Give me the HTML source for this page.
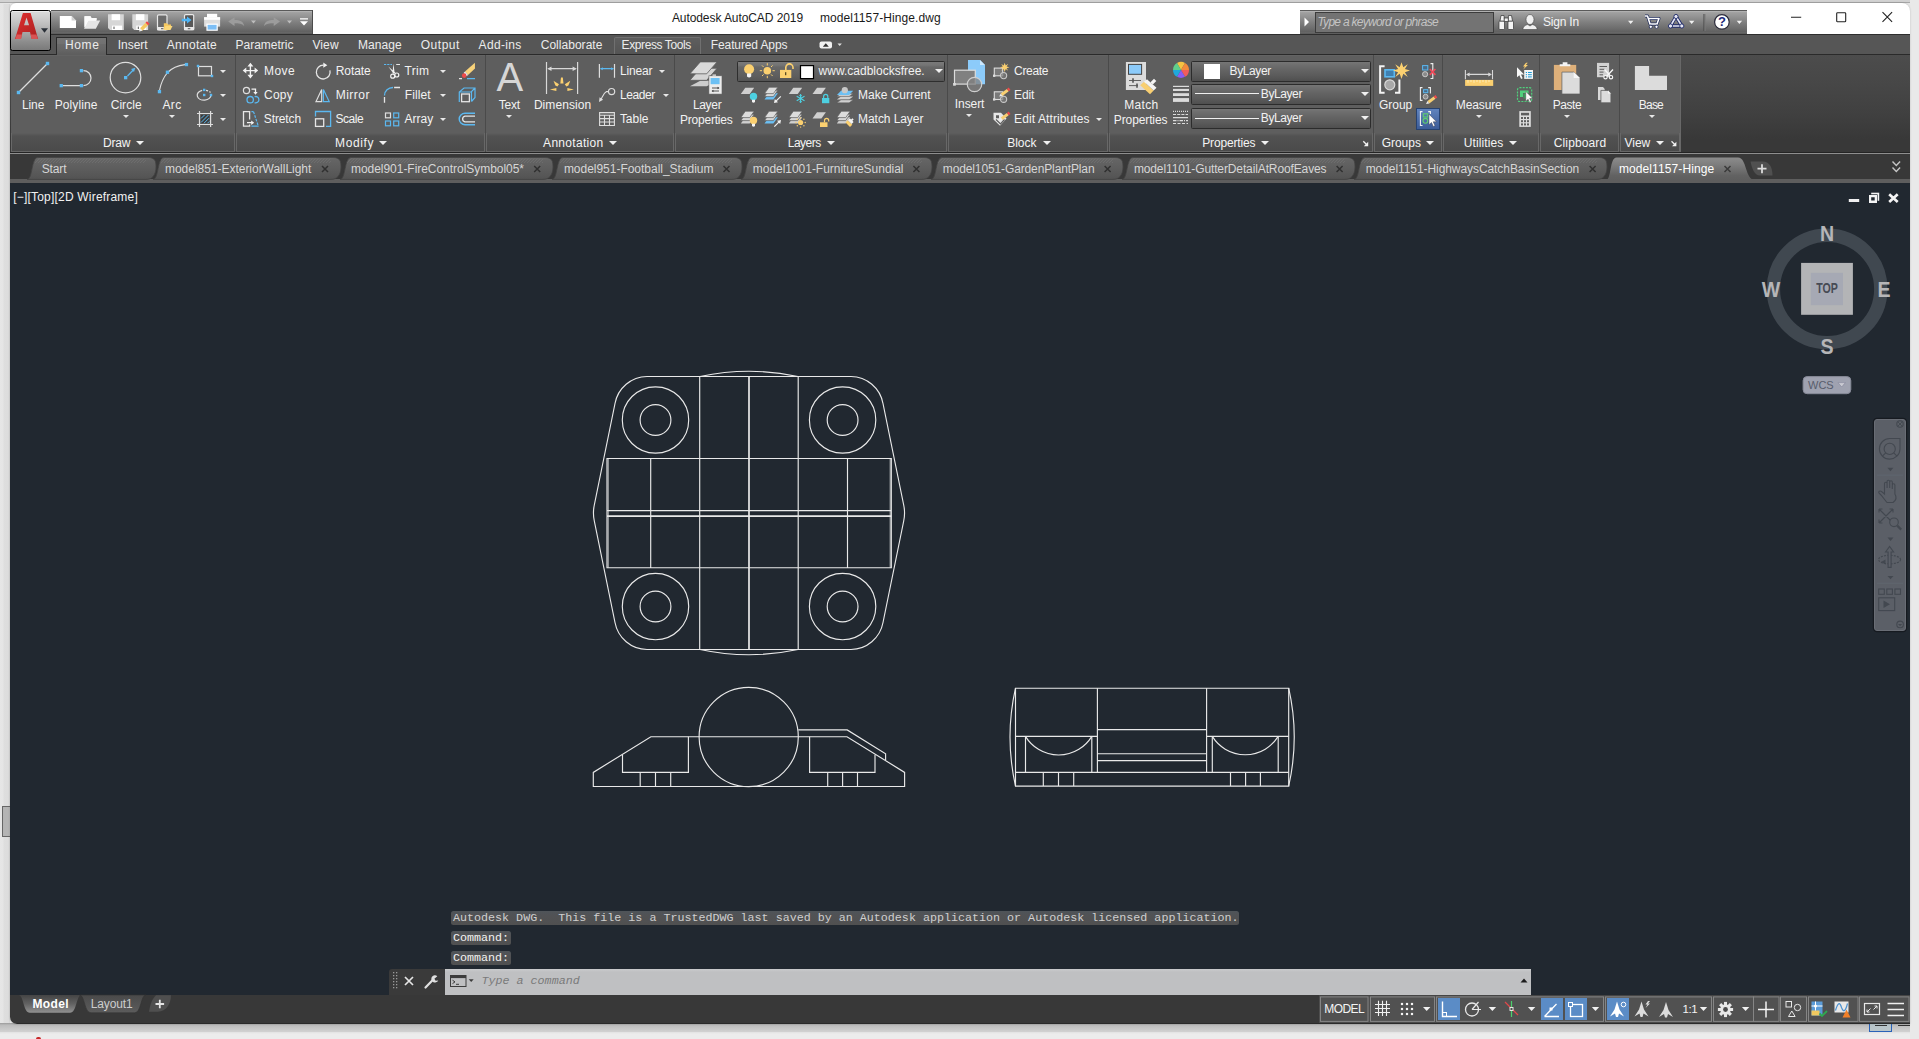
<!DOCTYPE html>
<html><head><meta charset="utf-8"><title>Autodesk AutoCAD 2019 - model1157-Hinge.dwg</title>
<style>
*{box-sizing:border-box;margin:0;padding:0}
html,body{width:1919px;height:1039px;overflow:hidden}
body{position:relative;background:#e6e6e6;font-family:"Liberation Sans",sans-serif;font-size:12px;color:#f0f0f0}
.a{position:absolute}
.t{position:absolute;white-space:nowrap;line-height:14px;height:14px}
svg{position:absolute;overflow:visible}
/* desktop behind */
#bgtop{left:0;top:0;width:1919px;height:4px;background:linear-gradient(#d2d2d2 0,#d2d2d2 1.8px,#a8a8a8 2px,#a8a8a8 3px,#e6e6e6 3px)}
#bgbot{left:0;top:1023px;width:1919px;height:16px;background:linear-gradient(#9a9a9a 0,#bcbcbc 2px,#c6c6c6 5px,#d0d0d0 8.5px,#e4e4e4 9.5px,#ececec 11px,#ececec 16px)}
#win{left:10px;top:3px;width:1900px;height:1021px;background:#fff;border-radius:6px 8px 0 7px;overflow:hidden;box-shadow:0 0 2px rgba(0,0,0,.22)}
/* inside #win coordinates are offset by (-10,-3); use #in wrapper to keep page coords */
#in{left:-10px;top:-3px;width:1919px;height:1039px}
#tabrow{left:10px;top:34px;width:1900px;height:20px;background:#565656;border-top:1px solid #2e2e2e}
#ribbon{left:10px;top:54px;width:1900px;height:99px;background:linear-gradient(#2a2a2a 0,#2a2a2a 1px,#4c4c4c 1px,#474747 30px,#404040 60px,#383838 85px,#383838 98px,#2a2a2a 98px)}
#doctabs{left:10px;top:153px;width:1900px;height:30px;background:#383838}
#canvas{left:10px;top:183px;width:1900px;height:812px;background:#212830}
#status{left:10px;top:995px;width:1900px;height:29px;background:linear-gradient(#383838 0,#383838 28px,#2a2a2a 28px)}
.rt{color:#ececec}
.panel{position:absolute;top:55px;height:97px;background:linear-gradient(#656565 0,#5e5e5e 1.5px,#5e5e5e 100%);box-shadow:inset -1px 0 0 #4a4a4a}
.ptitle{position:absolute;left:0;right:1px;bottom:0;height:19px;background:linear-gradient(#5e5e5e 0,#525252 3px,#4a4a4a 100%);border-right:1px solid #686868;border-left:1px solid #686868;border-bottom:1px solid #666}
.pt{position:absolute;white-space:nowrap;line-height:14px;height:14px;color:#f4f4f4}
.dd{position:absolute;width:0;height:0;border-left:3px solid transparent;border-right:3px solid transparent;border-top:3px solid #e8e8e8}
.dd4{position:absolute;width:0;height:0;border-left:4px solid transparent;border-right:4px solid transparent;border-top:4px solid #f0f0f0}
.lb{color:#f2f2f2}
.cl{width:40px;text-align:center;color:#b6b6b8;font-weight:bold;font-size:22.5px;line-height:26px;height:26px;transform:scaleX(.87)}
.hl{background:linear-gradient(#4f5459,#515254 40%,#505050);border-radius:2.5px}
.mono{font-family:"Liberation Mono",monospace;font-size:11.7px}
.cmb{background:linear-gradient(#767676 0,#6e6e6e 3px,#646464 8px,#5c5c5c 13px,#4f4f4f 100%);border:1px solid #2c2c2c;border-radius:1.5px}
</style></head><body>
<div class="a" style="left:0;top:3px;width:10px;height:1021px;background:linear-gradient(90deg,#e6e6e6 0,#e5e5e5 3px,#dedede 4px,#dcdcdc 9px,#d0d0d0 10px)"></div>
<div class="a" style="left:2.3px;top:806.2px;width:9px;height:31.3px;background:#b4b4b4;border:1px solid #666"></div>
<div class="a" id="bgtop"></div>
<div class="a" id="bgbot"></div>
<div class="a" style="left:1868.5px;top:1020px;width:23.5px;height:12px;background:#b9c5c9;border:1.4px solid #2a62b8"></div>
<div class="a" style="left:1875px;top:1024.8px;width:11.5px;height:1.2px;background:#333"></div>
<div class="a" style="left:1898px;top:1024.8px;width:12px;height:1.2px;background:#333"></div>
<div class="a" style="left:1910px;top:0;width:9px;height:1039px;background:#e9e9e9"></div>
<div class="a" style="left:36px;top:1036.5px;width:5px;height:3px;background:#c62828;border-radius:2px 2px 0 0"></div>
<div class="a" id="win"><div class="a" id="in">
<!-- BASE AREAS -->
<div class="a" id="tabrow"></div>
<div class="a" id="ribbon"></div>
<div class="a" id="doctabs"></div>
<div class="a" id="canvas"></div>
<div class="a" id="status"></div>
<!-- TITLE BAR -->
<div class="t" style="letter-spacing:-0.078px;left:671.90px;top:10.84px;color:#1a1a1a">Autodesk AutoCAD 2019</div>
<div class="t" style="letter-spacing:0.084px;left:819.90px;top:10.84px;color:#1a1a1a">model1157-Hinge.dwg</div>
<div class="a" id="qat" style="left:51px;top:10px;width:262px;height:24px;border-right:1px solid #4c4c4c;background:linear-gradient(#555 0,#5a5a5a .5px,#b2b2b2 1.4px,#a0a0a0 2.6px,#929292 7px,#808080 12px,#6e6e6e 18px,#5f5f5f 22.4px,#8a8a8a 23px,#555 23.6px,#4a4a4a 24px)"></div>
<div class="a" id="info" style="left:1300px;top:10px;width:446.5px;height:24px;background:linear-gradient(#555 0,#5a5a5a .5px,#b2b2b2 1.4px,#a0a0a0 2.6px,#929292 7px,#808080 12px,#6e6e6e 18px,#5f5f5f 22.4px,#8a8a8a 23px,#555 23.6px,#4a4a4a 24px)"></div>
<div class="a" style="left:1314.5px;top:11.5px;width:179px;height:21px;background:#737373;border:1px solid #3c3c3c"></div>
<div class="t" style="letter-spacing:-0.724px;left:1317.40px;top:14.54px;color:#c4c4c4;font-style:italic">Type a keyword or phrase</div>
<div class="t" style="letter-spacing:-0.193px;left:1542.90px;top:15.34px;color:#f4f4f4">Sign In</div>
<div class="a" id="appbtn" style="left:10px;top:10px;width:41px;height:41px;background:linear-gradient(#f4f4f4 0,#d8d8d8 1.5px,#cfcfcf 6px,#bdbdbd 14px,#a5a5a5 22px,#8c8c8c 31px,#7a7a7a 39px);border:1.3px solid #000;border-radius:2.5px"></div>
<svg style="left:0;top:0" width="1919" height="1039" viewBox="0 0 1919 1039">
<defs><linearGradient id="ared" x1="0" y1="0" x2="1" y2="1"><stop offset="0" stop-color="#e03030"/><stop offset=".5" stop-color="#c62828"/><stop offset="1" stop-color="#a82222"/></linearGradient></defs>
<!-- A logo -->
<path d="M22.900 13 H30.600 L38.100 39 H31.600 L30 32 H22.500 L21 39 H15 Z M26.500 17.500 L24 25.200 H29.100 Z" fill="url(#ared)" fill-rule="evenodd"/>
<path d="M15.500 39 l1.200 -4.500 h5.200 l-0.900 4.500z M31.600 39 l-1 -4.500 h5.800 l1.500 4.500z" fill="#e86a6a" opacity=".7"/>
<path d="M41 28.200 h7 l-3.500 4.600z" fill="#2a3038"/>
<!-- QAT icons -->
<path d="M59.800 16 H71.600 L76 20.500 V28 H59.800 Z" fill="#fff"/><path d="M71.600 16 V20.500 H76 Z" fill="#d0d0d0"/>
<path d="M84.500 27.500 V16.200 H90.500 L91.500 18 H96.500 V20.500" fill="#fff"/><path d="M84 28.700 L88.300 20.500 H100.200 L95.800 28.700 Z" fill="#e6e6e6"/><path d="M84.500 16.200 H90.500 L91.500 18 H96.500 V20.500 H88.300 L84.500 27.500Z" fill="#fbfbfb"/>
<g id="sv"><path d="M108 14.200 H123.800 V30 H110 L108 28 Z" fill="#d6d6d6"/><rect x="111.600" y="14.200" width="8.500" height="6" fill="#fff"/><rect x="112" y="25.600" width="10" height="4.400" fill="#fff"/><rect x="113.500" y="26.600" width="1" height="2.400" fill="#555"/></g>
<use href="#sv" x="24.300"/>
<path d="M140 28.300 L145.500 22.700 L148 25.200 L142.500 30.800 Z" fill="#f5c860"/><path d="M145.500 22.700 L147 21.200 L149.500 23.700 L148 25.200 Z" fill="#ee4848"/><path d="M140 28.300 l-1 3.200 l3.500 -0.700z" fill="#eee"/>
<rect x="157.500" y="14.800" width="9.500" height="15" rx="1.200" fill="#6a6a6a" stroke="#e8e8e8" stroke-width="1.200"/><rect x="157" y="27" width="10.500" height="3.300" fill="#e8e8e8"/><rect x="161" y="28.200" width="2.500" height="1" fill="#555"/>
<path d="M163.800 30 V23.300 H167 L168 24.500 H171 V26" fill="#f5c860"/><path d="M163.500 30 L165.500 26 H172.500 L170.500 30Z" fill="#fbd87a"/>
<rect x="184.500" y="14.600" width="9.200" height="15" rx="1.200" fill="#585858" stroke="#e8e8e8" stroke-width="1.200"/><rect x="184" y="27" width="10.200" height="3.200" fill="#e8e8e8"/><rect x="187.800" y="28.200" width="2.500" height="1" fill="#555"/>
<path d="M181.800 18.800 H187 V16.500 L191.500 20 L187 23.500 V21.200 H181.800Z" fill="#4db4f5"/>
<rect x="207" y="13.800" width="10.200" height="6" fill="#fff"/><rect x="204.100" y="17.200" width="16" height="9.400" fill="#dedede"/><rect x="204.100" y="17.200" width="16" height="2.600" fill="#fff"/><rect x="207" y="24.200" width="10.200" height="6" fill="#7cbef5" stroke="#fff" stroke-width="1.200"/>
<path d="M228.200 21.500 L234.500 17.300 V20 C240 20 243.500 21.500 244.200 26 C242 23.500 239 23.300 234.500 23.300 V25.900 Z" fill="#9c9c9c"/>
<path d="M280 21.500 L273.700 17.300 V20 C268.200 20 264.700 21.500 264 26 C266.200 23.500 269.200 23.300 273.700 23.300 V25.900 Z" fill="#9c9c9c"/>
<path d="M251 20.400 h5 l-2.500 3z M287 20.400 h5 l-2.500 3z" fill="#bdbdbd"/>
<path d="M300 18.200 h8 v1.300 h-8z M300 21.200 h8 l-4 4.400z" fill="#fff"/>
<!-- ribbon minimize btn -->
<rect x="819.500" y="41.500" width="12.500" height="7" rx="2" fill="#f0f0f0"/><path d="M822.800 46.700 h6 l-3 -3.400z" fill="#333"/><path d="M837.500 43.500 h4.400 l-2.200 2.600z" fill="#e0e0e0"/>
<!-- infocenter icons -->
<path d="M1304.500 17.500 v9 l4.500 -4.500z" fill="#fff"/>
<g fill="#f4f4f4" stroke="#333" stroke-width=".7"><rect x="1499" y="21" width="5.500" height="8.500" rx="1"/><rect x="1508" y="21" width="5.500" height="8.500" rx="1"/><path d="M1500 21 l1 -5.500 h3 l0.500 5.500z M1512.500 21 l-1 -5.500 h-3 l-0.500 5.500z"/><rect x="1504.200" y="18" width="4" height="3.500"/></g>
<g fill="#f0f0f0" stroke="#444" stroke-width=".6"><ellipse cx="1530" cy="19.500" rx="4" ry="5"/><path d="M1522.800 29.500 c0.500 -4 3.500 -4.500 5 -5 l2.200 1.500 l2.200 -1.500 c1.500 0.500 4.500 1 5 5z"/></g>
<path d="M1628 20.800 h5.400 l-2.700 3.200z M1689 20.800 h5.400 l-2.700 3.200z M1736.700 20.800 h5.400 l-2.700 3.200z" fill="#f0f0f0"/>
<g fill="none" stroke="#1e2a5a" stroke-width="3" stroke-linejoin="round"><path d="M1645 16 h2.500 l2.500 8 h7 l2 -5.500 h-10"/></g>
<g fill="none" stroke="#fff" stroke-width="1.600" stroke-linejoin="round"><path d="M1645 16 h2.500 l2.500 8 h7 l2 -5.500 h-10"/></g>
<circle cx="1650.800" cy="26.800" r="1.600" fill="#fff" stroke="#1e2a5a" stroke-width=".8"/><circle cx="1656.500" cy="26.800" r="1.600" fill="#fff" stroke="#1e2a5a" stroke-width=".8"/>
<path d="M1676 16.500 L1670.500 26 H1681.800 Z" fill="none" stroke="#1e2a6a" stroke-width="3.400" stroke-linejoin="round"/><path d="M1676 16.500 L1670.500 26 H1681.800 Z" fill="none" stroke="#e8e8f4" stroke-width="1.600" stroke-linejoin="round"/>
<g fill="#e8e8f4" stroke="#1e2a6a" stroke-width=".9"><circle cx="1676" cy="16.500" r="2.100"/><circle cx="1670.500" cy="26" r="2.100"/><circle cx="1681.800" cy="26" r="2.100"/></g>
<path d="M1704 14 v17" stroke="#444" stroke-width="1"/><path d="M1705 14 v17" stroke="#7a7a7a" stroke-width="1"/>
<circle cx="1721.900" cy="21.900" r="7.300" fill="#fff" stroke="#2a2a3a" stroke-width="1.200"/>
<!-- window controls -->
<path d="M1791 17.200 h10.200" stroke="#222" stroke-width="1.100"/>
<rect x="1836.700" y="12.700" width="9" height="9" rx=".8" fill="none" stroke="#222" stroke-width="1.100"/>
<path d="M1882.500 12.200 l9.600 9.600 M1892.100 12.200 l-9.600 9.600" stroke="#222" stroke-width="1.100"/>
</svg>
<div class="t" style="left:1717.500px;top:14.500px;width:9px;text-align:center;color:#1e2a7a;font-weight:bold;font-size:13px">?</div>
<!-- RIBBON TABS -->
<div class="a" style="left:56.2px;top:37.2px;width:50.8px;height:17.8px;background:linear-gradient(#747474 0,#717171 5.5px,#6a6a6a 6.5px,#656565 12px,#5e5e5e 16px);border:1px solid #2a2a2a;border-bottom:none"></div>
<div class="a" style="left:613.5px;top:36.5px;width:87px;height:17.5px;background:linear-gradient(#5e5e5e,#545454);border:1px solid #707070;border-bottom:none;border-radius:2px 2px 0 0"></div>
<div class="t rt" style="letter-spacing:0.628px;left:65.00px;top:38.14px">Home</div>
<div class="t rt" style="letter-spacing:-0.043px;left:117.80px;top:38.14px">Insert</div>
<div class="t rt" style="letter-spacing:0.279px;left:166.80px;top:38.14px">Annotate</div>
<div class="t rt" style="letter-spacing:-0.013px;left:235.50px;top:38.14px">Parametric</div>
<div class="t rt" style="letter-spacing:0.134px;left:312.40px;top:38.14px">View</div>
<div class="t rt" style="letter-spacing:0.105px;left:357.90px;top:38.14px">Manage</div>
<div class="t rt" style="letter-spacing:0.534px;left:420.70px;top:38.14px">Output</div>
<div class="t rt" style="letter-spacing:0.335px;left:478.60px;top:38.14px">Add-ins</div>
<div class="t rt" style="letter-spacing:0.033px;left:540.70px;top:38.14px">Collaborate</div>
<div class="t rt" style="letter-spacing:-0.399px;left:621.60px;top:38.14px">Express Tools</div>
<div class="t rt" style="letter-spacing:-0.114px;left:710.80px;top:38.14px">Featured Apps</div>
<!-- RIBBON PANELS -->
<div class="panel" style="left:11px;width:225px"><div class="ptitle"></div></div>
<div class="panel" style="left:236px;width:250px"><div class="ptitle"></div></div>
<div class="panel" style="left:486px;width:189px"><div class="ptitle"></div></div>
<div class="panel" style="left:675px;width:273px"><div class="ptitle"></div></div>
<div class="panel" style="left:948px;width:161px"><div class="ptitle"></div></div>
<div class="panel" style="left:1109px;width:265px"><div class="ptitle"></div></div>
<div class="panel" style="left:1374px;width:69px"><div class="ptitle"></div></div>
<div class="panel" style="left:1443px;width:97px"><div class="ptitle"></div></div>
<div class="panel" style="left:1540px;width:80px"><div class="ptitle"></div></div>
<div class="panel" style="left:1620px;width:61px;box-shadow:inset -1px 0 0 #686868"><div class="ptitle"></div></div>
<!-- panel titles -->
<div class="pt" style="letter-spacing:-0.172px;left:102.90px;top:136.14px">Draw</div><div class="dd4" style="left:136px;top:141px"></div>
<div class="pt" style="letter-spacing:0.591px;left:335.10px;top:136.14px">Modify</div><div class="dd4" style="left:379px;top:141px"></div>
<div class="pt" style="letter-spacing:0.301px;left:543.10px;top:136.14px">Annotation</div><div class="dd4" style="left:609px;top:141px"></div>
<div class="pt" style="letter-spacing:-0.526px;left:787.80px;top:136.14px">Layers</div><div class="dd4" style="left:827px;top:141px"></div>
<div class="pt" style="letter-spacing:-0.036px;left:1007.20px;top:136.14px">Block</div><div class="dd4" style="left:1042.5px;top:141px"></div>
<div class="pt" style="letter-spacing:-0.156px;left:1202.20px;top:136.14px">Properties</div><div class="dd4" style="left:1261px;top:141px"></div>
<div class="pt" style="letter-spacing:-0.032px;left:1381.70px;top:136.14px">Groups</div><div class="dd4" style="left:1426px;top:141px"></div>
<div class="pt" style="letter-spacing:0.116px;left:1463.70px;top:136.14px">Utilities</div><div class="dd4" style="left:1509px;top:141px"></div>
<div class="pt" style="letter-spacing:0.116px;left:1553.80px;top:136.14px">Clipboard</div>
<div class="pt" style="letter-spacing:-0.032px;left:1624.60px;top:136.14px">View</div><div class="dd4" style="left:1656px;top:141px"></div>
<!-- big button labels -->
<div class="t lb" style="letter-spacing:-0.062px;left:21.90px;top:97.84px">Line</div>
<div class="t lb" style="letter-spacing:0.110px;left:54.70px;top:97.84px">Polyline</div>
<div class="t lb" style="letter-spacing:0.046px;left:110.70px;top:97.84px">Circle</div>
<div class="t lb" style="letter-spacing:0.350px;left:162.50px;top:97.84px">Arc</div>
<div class="dd" style="left:122.5px;top:115px"></div><div class="dd" style="left:168.5px;top:115px"></div>
<div class="dd" style="left:219.5px;top:70px"></div><div class="dd" style="left:219.5px;top:94px"></div><div class="dd" style="left:219.5px;top:118px"></div>
<!-- modify labels -->
<div class="t lb" style="letter-spacing:0.385px;left:264.10px;top:63.74px">Move</div><div class="t lb" style="letter-spacing:0.195px;left:264.10px;top:88.14px">Copy</div><div class="t lb" style="letter-spacing:-0.119px;left:263.80px;top:112.14px">Stretch</div>
<div class="t lb" style="letter-spacing:-0.052px;left:335.70px;top:63.74px">Rotate</div><div class="t lb" style="letter-spacing:0.494px;left:335.70px;top:88.14px">Mirror</div><div class="t lb" style="letter-spacing:-0.458px;left:335.40px;top:112.14px">Scale</div>
<div class="t lb" style="letter-spacing:0.351px;left:404.50px;top:63.74px">Trim</div><div class="t lb" style="letter-spacing:0.071px;left:404.80px;top:88.14px">Fillet</div><div class="t lb" style="letter-spacing:0.032px;left:404.50px;top:112.14px">Array</div>
<div class="dd" style="left:439.5px;top:70px"></div><div class="dd" style="left:440.4px;top:94px"></div><div class="dd" style="left:440.4px;top:118px"></div>
<!-- annotation labels -->
<div class="t lb" style="letter-spacing:-0.272px;left:498.80px;top:97.84px">Text</div><div class="dd" style="left:506.4px;top:115px"></div>
<div class="t lb" style="letter-spacing:0.062px;left:533.90px;top:97.84px">Dimension</div>
<div class="t lb" style="letter-spacing:-0.172px;left:619.90px;top:63.74px">Linear</div><div class="t lb" style="letter-spacing:-0.395px;left:619.90px;top:88.14px">Leader</div><div class="t lb" style="letter-spacing:-0.022px;left:619.90px;top:112.14px">Table</div>
<div class="dd" style="left:659.4px;top:70px"></div><div class="dd" style="left:662.6px;top:94px"></div>
<!-- layers labels -->
<div class="t lb" style="letter-spacing:-0.308px;left:692.90px;top:97.84px">Layer</div>
<div class="t lb" style="letter-spacing:-0.200px;left:679.90px;top:112.54px">Properties</div>
<div class="a" style="left:737px;top:60.5px;width:208px;height:21px;background:linear-gradient(#797979 0,#757575 3px,#686868 5px,#636363 9px,#5e5e5e 14px,#555 100%);border:1px solid #2e2e2e;border-radius:1.5px"></div>
<div class="t lb" style="letter-spacing:0.003px;left:818.60px;top:63.74px">www.cadblocksfree.</div><div class="dd4" style="left:935px;top:69px"></div>
<div class="t lb" style="letter-spacing:-0.018px;left:858.10px;top:88.14px">Make Current</div><div class="t lb" style="letter-spacing:-0.073px;left:858.10px;top:112.14px">Match Layer</div>
<!-- block labels -->
<div class="t lb" style="letter-spacing:-0.083px;left:954.80px;top:96.64px">Insert</div><div class="dd" style="left:966.4px;top:114px"></div>
<div class="t lb" style="letter-spacing:-0.326px;left:1014.10px;top:63.74px">Create</div><div class="t lb" style="letter-spacing:-0.129px;left:1014.10px;top:88.14px">Edit</div><div class="t lb" style="letter-spacing:0.104px;left:1014.10px;top:112.14px">Edit Attributes</div>
<div class="dd" style="left:1096.4px;top:118px"></div>
<!-- properties labels -->
<div class="t lb" style="letter-spacing:0.328px;left:1124.20px;top:97.84px">Match</div>
<div class="t lb" style="letter-spacing:-0.111px;left:1113.80px;top:112.54px">Properties</div>
<div class="a cmb" style="left:1191px;top:60.5px;width:180px;height:21px"></div>
<div class="a cmb" style="left:1191px;top:83.5px;width:180px;height:21px"></div>
<div class="a cmb" style="left:1191px;top:107.5px;width:180px;height:21px"></div>
<div class="a" style="left:1204px;top:63.5px;width:15.5px;height:15px;background:#fff"></div>
<div class="t lb" style="letter-spacing:-0.372px;left:1229.50px;top:63.74px">ByLayer</div><div class="dd4" style="left:1361px;top:69px"></div>
<div class="a" style="left:1195px;top:93.3px;width:64px;height:1.2px;background:#f0f0f0"></div>
<div class="t lb" style="letter-spacing:-0.405px;left:1260.80px;top:86.54px">ByLayer</div><div class="dd4" style="left:1361px;top:92px"></div>
<div class="a" style="left:1195px;top:117.9px;width:64px;height:1.2px;background:#f0f0f0"></div>
<div class="t lb" style="letter-spacing:-0.405px;left:1260.80px;top:110.64px">ByLayer</div><div class="dd4" style="left:1361px;top:116px"></div>
<!-- groups etc -->
<div class="t lb" style="letter-spacing:-0.065px;left:1379.10px;top:97.84px">Group</div>
<div class="a" style="left:1416px;top:108px;width:24px;height:22px;background:linear-gradient(#6083bd,#3c5c98);border:1px solid #27426f"></div>
<div class="t lb" style="letter-spacing:-0.115px;left:1455.80px;top:97.84px">Measure</div><div class="dd" style="left:1475.6px;top:115px"></div>
<div class="t lb" style="letter-spacing:-0.472px;left:1552.80px;top:97.84px">Paste</div><div class="dd" style="left:1564.3px;top:115px"></div>
<div class="t lb" style="letter-spacing:-0.786px;left:1638.80px;top:97.84px">Base</div><div class="dd" style="left:1648.5px;top:115px"></div>
<!-- RIBBON ICONS: DRAW + MODIFY -->
<svg style="left:0;top:0" width="1919" height="1039" viewBox="0 0 1919 1039" fill="none" stroke-linecap="butt">
<g stroke="#dedede" stroke-width="1.200">
<!-- line -->
<path d="M19.500 91.500 L46.500 64.500"/>
<!-- polyline -->
<path d="M63 85.600 H80 M83.500 70.600 A7.500 7.500 0 0 1 83.500 85.600"/>
<!-- circle -->
<circle cx="125.500" cy="77.600" r="15.300"/>
<!-- arc -->
<path d="M159.600 90 Q161.500 80 167.500 72.500 Q174 66 185 64.600"/>
<!-- rectangle -->
<rect x="198.500" y="66.500" width="13" height="9.300"/>
<!-- ellipse -->
<path d="M202.200 90.300 A6.900 5 0 1 0 211 95" /><path d="M206 90.300 A6.900 5 0 0 1 210.500 92.500" stroke-dasharray="2 1.500"/>
<!-- hatch -->
<path d="M199.500 111 V127 M210.600 111 V127 M197 113.500 H213 M197 124.500 H213"/>
</g>
<rect x="200.800" y="114.800" width="8.500" height="8.500" fill="#3c3c3c"/>
<path d="M201 118.500 l3.500 -3.500 M201 122.500 l7.500 -7.500 M204 123.200 l5 -5 M207.500 123.200 l1.800 -1.800" stroke="#5bb8f0" stroke-width="1"/>
<g fill="#5bb8f0">
<rect x="16.800" y="90.800" width="3.400" height="3.400"/><rect x="45.800" y="61.800" width="3.400" height="3.400"/>
<rect x="59.600" y="84" width="3.300" height="3.300"/><rect x="79.800" y="84" width="3.300" height="3.300"/><rect x="79.800" y="69" width="3.300" height="3.300"/>
<rect x="124" y="76" width="3.300" height="3.300"/>
<rect x="157.800" y="90" width="3.300" height="3.300"/><rect x="165.800" y="70.600" width="3.300" height="3.300"/><rect x="184.800" y="62.900" width="3.300" height="3.300"/>
<rect x="196.800" y="64.800" width="2.400" height="2.400"/><rect x="210.800" y="74.800" width="2.400" height="2.400"/>
<rect x="203" y="88.700" width="2.400" height="2.400"/><rect x="203" y="93.800" width="2.400" height="2.400"/><rect x="209.800" y="93.800" width="2.400" height="2.400"/>
</g>
<path d="M127.500 76 L133.500 69.800" stroke="#5bb8f0" stroke-width="1.300"/><path d="M135.300 67.800 l-4.300 1.300 l3 3z" fill="#5bb8f0"/>
<!-- MODIFY -->
<!-- move -->
<path d="M250.400 65 V76.200 M244.800 70.600 H256" stroke="#f2f2f2" stroke-width="1.400"/>
<path d="M250.400 62.800 l3 3.600 h-6z M250.400 78.400 l3 -3.600 h-6z M242.700 70.600 l3.600 -3 v6z M258.200 70.600 l-3.600 -3 v6z" fill="#f2f2f2"/>
<!-- copy -->
<circle cx="246.500" cy="90.500" r="3.100" stroke="#dedede" stroke-width="1.200"/>
<path d="M251.500 89.200 H255.500 V92.500" stroke="#f2f2f2" stroke-width="1.300"/><path d="M253.300 92 h4.400 l-2.200 2.800z" fill="#f2f2f2"/>
<circle cx="250.200" cy="99.700" r="3.200" stroke="#5bb8f0" stroke-width="1.300"/><path d="M254.600 96.700 A3.200 3.200 0 1 1 254.600 102.700" stroke="#5bb8f0" stroke-width="1.300"/>
<!-- stretch -->
<path d="M249.600 119.500 V111.700 H243.500 V126.200 H249.600 V124.500" stroke="#e6e6e6" stroke-width="1.300"/>
<path d="M247 122.700 H252" stroke="#f2f2f2" stroke-width="1.300"/><path d="M254.200 122.700 l-3 -2.300 v4.600z" fill="#f2f2f2"/>
<path d="M251.400 111.700 H253.500" stroke="#5bb8f0" stroke-width="1.300"/><path d="M253.500 111.700 L258.300 126" stroke="#5bb8f0" stroke-width="1.200" stroke-dasharray="2.600 1.200"/><path d="M258.600 126.200 H251.400" stroke="#5bb8f0" stroke-width="1.300"/>
<!-- rotate -->
<path d="M323.600 65.200 A6.900 6.900 0 1 0 329.900 70.300" stroke="#e6e6e6" stroke-width="1.300"/><path d="M327.300 65.200 l-4 -2.700 v5.200z" fill="#f2f2f2"/>
<!-- mirror -->
<path d="M321.700 89.500 V101.600 H316 Z" stroke="#dedede" stroke-width="1.200"/><path d="M323.400 89.500 V101.600 H329.200 Z" stroke="#5bb8f0" stroke-width="1.200"/>
<!-- scale -->
<path d="M315.500 116.500 V111.500 H330.600 V126.400 H326" stroke="#5bb8f0" stroke-width="1.300"/><rect x="315.500" y="118.800" width="8.200" height="7.600" stroke="#e6e6e6" stroke-width="1.300"/>
<!-- trim -->
<path d="M384 64.500 H392" stroke="#5bb8f0" stroke-width="1.200" stroke-dasharray="2.200 1"/><path d="M396.200 64.500 H400" stroke="#e6e6e6" stroke-width="1.200"/>
<path d="M393.400 63.400 L394.600 72.500 L392.500 73.200 Z M388.300 66.500 L395.500 72.800 L393.800 74 Z" fill="#f2f2f2"/>
<circle cx="392.700" cy="76.200" r="2" stroke="#f2f2f2" stroke-width="1.200"/><circle cx="396.800" cy="75" r="2" stroke="#f2f2f2" stroke-width="1.200"/>
<!-- fillet -->
<path d="M384.500 97 V102.800 M394.100 87.500 H400" stroke="#e6e6e6" stroke-width="1.300"/><path d="M384.500 95.500 A8.500 8 0 0 1 393 87.500" stroke="#5bb8f0" stroke-width="1.300"/>
<!-- array -->
<rect x="385.500" y="113" width="5" height="4.800" stroke="#dedede" stroke-width="1.200"/><rect x="393.700" y="113" width="5" height="4.800" stroke="#5bb8f0" stroke-width="1.200"/><rect x="385.500" y="121" width="5" height="4.800" stroke="#5bb8f0" stroke-width="1.200"/><rect x="393.700" y="121" width="5" height="4.800" stroke="#5bb8f0" stroke-width="1.200"/>
<!-- erase -->
<path d="M474.900 62.800 L475 68.500 L468 75 L465 71.500 Z" fill="#f8d27a"/><path d="M465 71.500 L468 75 L466.600 76.300 L463.600 72.900Z" fill="#f4f4f4"/><circle cx="464.200" cy="75.600" r="2.300" fill="#ee4a4a"/>
<path d="M459 78.600 H462" stroke="#e6e6e6" stroke-width="1.100"/><path d="M467 78.600 H475" stroke="#5bb8f0" stroke-width="1.100"/>
<!-- explode -->
<rect x="461.600" y="94" width="7.800" height="7.700" stroke="#e6e6e6" stroke-width="1.300"/>
<path d="M459.300 102 V92 L464 88 H475 V97.500 L471.500 101.500 M459.300 92 H471.200 L475 88 M471.500 92 V101.500" stroke="#5bb8f0" stroke-width="1.200"/>
<!-- offset -->
<path d="M475 113.200 H465 A5.800 5.800 0 0 0 465 124.800 H475" stroke="#5bb8f0" stroke-width="1.400"/><path d="M475 116.200 H465 A2.900 2.900 0 0 0 465 121.900 H475" stroke="#e6e6e6" stroke-width="1.300"/>
</svg>
<!-- RIBBON ICONS: ANNOTATION + LAYERS -->
<div class="t" style="left:496.6px;top:54.8px;font-size:40px;line-height:44px;height:44px;color:#d6d6d6">A</div>
<svg style="left:0;top:0" width="1919" height="1039" viewBox="0 0 1919 1039" fill="none">
<defs>
<path id="pg" d="M0 0 h8.900 l-4.500 6.400 h-8.900z"/>
<g id="stack3"><use href="#pg" x="0" y="6" fill="#cfcfcf"/><use href="#pg" x="0" y="3" fill="#d6d6d6" stroke="#5d5d5d" stroke-width=".7"/><use href="#pg" fill="#dcdcdc" stroke="#5d5d5d" stroke-width=".7"/></g>
<g id="stack3b"><use href="#pg" x="0" y="6" fill="#6cc0f4"/><use href="#pg" x="0" y="3" fill="#d6d6d6" stroke="#5d5d5d" stroke-width=".7"/><use href="#pg" fill="#dcdcdc" stroke="#5d5d5d" stroke-width=".7"/></g>
</defs>
<!-- dimension -->
<path d="M546.500 62 V94 M577.600 62 V94 M548.500 68.700 H575.600" stroke="#d8d8d8" stroke-width="1.200"/>
<path d="M547.300 68.700 l4.200 -2.300 v4.600z M576.800 68.700 l-4.200 -2.300 v4.600z" fill="#d8d8d8"/>
<g fill="#fbd070"><path d="M561 77.500 h1.800 l0.700 6 h-3.200z"/><path d="M553.500 80.800 l5.500 3.500 l-1.600 2.300 l-2 -1.200z"/><path d="M570.300 80.800 l-5.500 3.500 l1.600 2.300 l2 -1.200z"/><path d="M549.900 89.400 l6.500 -1.300 v3 z"/><path d="M573.900 89.400 l-6.500 -1.300 v3 z"/></g>
<!-- linear -->
<path d="M599.400 64 V77.800 M614.500 64 V77.800" stroke="#dedede" stroke-width="1.200"/><path d="M600.500 68.700 H613.500" stroke="#5bb8f0" stroke-width="1.300"/><path d="M600.200 68.700 l2.500 -1.500 v3z M613.700 68.700 l-2.500 -1.500 v3z" fill="#5bb8f0"/>
<!-- leader -->
<circle cx="611.600" cy="91.600" r="3.100" stroke="#dedede" stroke-width="1.200"/><path d="M608.500 91.600 H606.500 C603.500 93 602.500 97 600.800 99.500" stroke="#dedede" stroke-width="1.100"/><path d="M599 101.900 l0.600 -4.600 l3.500 2.500z" fill="#dedede"/>
<!-- table -->
<path d="M599.600 112.600 H614.400 V125.500 H599.600 Z M599.600 115.200 H614.400 M599.600 118.600 H614.400 M599.600 122 H614.400 M604.500 115.200 V125.500 M609.500 115.200 V125.500" stroke="#dedede" stroke-width="1.100"/>
<!-- layer properties -->
<path d="M700.300 80.800 h16.800 l-10.400 5.400 h-16.800z" fill="#cdcdcd"/>
<path d="M700.300 68.300 h16.800 l-10.400 12 h-16.800z" fill="#d4d4d4" stroke="#5d5d5d" stroke-width=".8"/>
<path d="M700.300 61.900 h16.800 l-10.400 11.900 h-16.800z" fill="#dadada" stroke="#5d5d5d" stroke-width=".8"/>
<rect x="708.900" y="75.800" width="13.100" height="18.300" fill="#ececec" stroke="#5d5d5d" stroke-width=".6"/><rect x="712.500" y="74.400" width="3.500" height="1.500" fill="#d0d0d0"/>
<rect x="710.600" y="78" width="9" height="6.200" fill="#6cc0f4"/>
<path d="M712 88 h7 M712 91 h7" stroke="#444" stroke-width=".9"/><path d="M719.500 88 l-2 -1.300 v2.600z M711.500 91 l2 -1.300 v2.600z" fill="#444"/>
<!-- layer combo icons -->
<circle cx="749.100" cy="69.300" r="5" fill="#fbd070"/><path d="M747 73.500 h4.200 v3 q-2.100 2 -4.200 0z" fill="#f4f4f4"/>
<circle cx="767.300" cy="70.700" r="3.800" fill="#fbd070"/><path d="M767.300 63.200 v2.300 M767.300 75.900 v2.300 M759.800 70.700 h2.300 M772.500 70.700 h2.300 M762 65.400 l1.600 1.600 M771 74.400 l1.600 1.600 M762 76 l1.600 -1.600 M771 67 l1.600 -1.600" stroke="#fbd070" stroke-width="1"/>
<rect x="780" y="69.900" width="11.300" height="8.100" fill="#fbd070"/><path d="M785.800 69.900 V67.500 A3.600 3.600 0 0 1 793 67.500 V69" stroke="#fbd070" stroke-width="1.600"/><rect x="785" y="72.200" width="1.300" height="3" fill="#5a4a20"/>
<rect x="800.500" y="65.600" width="13" height="13" fill="#fff" stroke="#000" stroke-width="1.200"/>
<!-- small layer icons row 2 -->
<use href="#pg" x="745.300" y="87.700" fill="#cfcfcf"/><circle cx="753.500" cy="96.500" r="3.700" fill="#4dd0e1"/><path d="M752 99.800 h3 v2.200 q-1.500 1.500 -3 0z" fill="#f4f4f4"/>
<use href="#stack3b" x="769" y="87.200"/><path d="M780.800 96.300 l-5.300 5.300" stroke="#f0f0f0" stroke-width="1.200"/><path d="M774 103 l0.800 -4 l3.200 3.200z" fill="#f0f0f0"/>
<use href="#pg" x="793.300" y="87.700" fill="#cfcfcf"/><g stroke="#4dd0e1" stroke-width="1.100"><path d="M800.600 94.100 v9 M796.700 96.300 l7.800 4.500 M796.700 100.800 l7.800 -4.500"/><path d="M799.200 95.200 l1.400 1.200 l1.400 -1.200 M799.200 102 l1.400 -1.200 l1.400 1.200" stroke-width=".8"/></g>
<use href="#pg" x="817" y="87.700" fill="#cfcfcf"/><rect x="822" y="98" width="7.300" height="5.200" fill="#4dd0e1"/><path d="M823.600 98 v-1.500 a2.100 2.100 0 0 1 4.200 0 v1.500" stroke="#4dd0e1" stroke-width="1.200"/>
<path d="M841 96.600 h12.200 l-4.100 3 h-12.200z" fill="#d0d0d0"/><path d="M841 99.800 h12.200 l-4.100 3 h-12.200z" fill="#d0d0d0" stroke="#5d5d5d" stroke-width=".5"/><path d="M841 93.400 h12.200 l-4.100 3 h-12.200z" fill="#d0d0d0" stroke="#5d5d5d" stroke-width=".5"/><path d="M841 90.700 h12.200 l-4.100 4.400 h-12.200z" fill="#6cc0f4"/><circle cx="844.800" cy="90.200" r="3.100" fill="#c8c8c8"/>
<!-- row 3 -->
<use href="#stack3" x="745.300" y="111.200"/><circle cx="753.500" cy="120.400" r="3.700" fill="#fbd070"/><path d="M752 123.700 h3 v2.200 q-1.500 1.500 -3 0z" fill="#f4f4f4"/>
<use href="#stack3b" x="769" y="111.200"/><path d="M774.300 126.600 l5.300 -5.300" stroke="#f0f0f0" stroke-width="1.200"/><path d="M781 120 l-0.800 4 l-3.200 -3.200z" fill="#f0f0f0"/>
<use href="#stack3" x="793.300" y="111.200"/><circle cx="800.600" cy="122.500" r="2.600" fill="#fbd070"/><g fill="#fbd070"><circle cx="800.600" cy="117.900" r=".7"/><circle cx="800.600" cy="127.100" r=".7"/><circle cx="796" cy="122.500" r=".7"/><circle cx="805.200" cy="122.500" r=".7"/><circle cx="797.300" cy="119.200" r=".7"/><circle cx="803.900" cy="119.200" r=".7"/><circle cx="797.300" cy="125.800" r=".7"/><circle cx="803.900" cy="125.800" r=".7"/></g>
<use href="#pg" x="817" y="112.200" fill="#cfcfcf"/><rect x="820" y="122.300" width="7.500" height="4.700" fill="#fbd070"/><path d="M824.500 122.300 v-1.800 a2.100 2.100 0 0 1 4.200 0 v1" stroke="#fbd070" stroke-width="1.200"/>
<use href="#stack3" x="841.300" y="111.200"/><path d="M845.500 122.500 l4.500 4.500 l2.300 -2.300 l-4.500 -4.500z" fill="#fbd070"/><path d="M847.800 120.200 l2 -2 l1.300 1.300 l1.300 -1.300 l1.300 1.300 l-1.300 1.300 l1.200 1.200 l-2 2z" fill="#f4f4f4"/>
</svg>
<!-- RIBBON ICONS: BLOCK, PROPERTIES, GROUPS, UTILITIES, CLIPBOARD, VIEW -->
<svg style="left:0;top:0" width="1919" height="1039" viewBox="0 0 1919 1039" fill="none">
<defs>
<path id="star" d="M0 -4.600 L1 -1.800 L3.500 -3.500 L1.900 -0.900 L4.700 0 L1.900 0.900 L3.500 3.500 L1 1.800 L0 4.600 L-1 1.800 L-3.500 3.500 L-1.900 0.900 L-4.700 0 L-1.900 -0.900 L-3.500 -3.500 L-1 -1.800Z"/>
<g id="blk"><rect x="0" y="0" width="8.400" height="7.700" fill="#7a7a7a" stroke="#dcdcdc" stroke-width="1.100"/><rect x="-1.300" y="6.500" width="2.300" height="2.300" fill="#dcdcdc"/><circle cx="9.300" cy="7.500" r="3.100" fill="#7a7a7a" fill-opacity=".7" stroke="#c8c8c8" stroke-width="1.100"/></g>
<g id="pencil"><path d="M0 0 L6.200 -4.600 L8 -2.200 L1.800 2.400Z" fill="#f8cf72"/><path d="M6.200 -4.600 L8 -6 L9.800 -3.600 L8 -2.200Z" fill="#ee4a4a"/><path d="M0 0 L1.800 2.400 L-1.500 3Z" fill="#eee"/></g>
<path id="cur" d="M0 0 V10.500 L2.500 8.300 L4.300 12.300 L6 11.500 L4.200 7.600 H7.500Z"/>
</defs>
<!-- insert -->
<path d="M968 60 H980 L985 65 V84.200 H968Z" fill="#8ccbfa"/><path d="M980 60 V65 H985Z" fill="#cde8fd"/>
<rect x="954.500" y="70.200" width="20.800" height="13.900" fill="#808080" stroke="#dcdcdc" stroke-width="1.200"/><rect x="953.100" y="83" width="2.700" height="2.700" fill="#dcdcdc"/>
<circle cx="974.500" cy="84.500" r="7.200" fill="#808080" fill-opacity=".75" stroke="#cfcfcf" stroke-width="1.200"/>
<!-- create -->
<use href="#blk" x="994.300" y="68.100"/><use href="#star" x="1004.700" y="67.300" fill="#fbd070"/>
<!-- edit -->
<use href="#blk" x="994.300" y="91.800"/><use href="#pencil" x="1000.700" y="93.500"/>
<!-- edit attributes -->
<path d="M993.500 112.800 H1001 L1006.500 118.500 L1000 125.800 L993.500 119.500Z" fill="#e6e6e6"/><path d="M996 115.200 h3 v3 h-3z" fill="#5d5d5d"/><path d="M996 119.500 l4.500 4.500 l4 -4.500" stroke="#5d5d5d" stroke-width="1.200"/>
<use href="#pencil" x="1000.700" y="117.500"/>
<!-- match properties -->
<rect x="1125.900" y="62" width="20.100" height="28" fill="#dcdcdc"/><rect x="1128.500" y="64.400" width="13.100" height="9.900" fill="#8ccbfa" stroke="#444" stroke-width="1"/>
<path d="M1129 80.500 H1141 M1129 85.600 H1138" stroke="#555" stroke-width=".9"/><path d="M1133 78.300 v4.400 M1137 83.400 v4.400" stroke="#555" stroke-width="1.600"/>
<path d="M1140.200 85.300 L1144 81.800 L1153.700 90.500 L1150 94.200Z" fill="#f8cf72"/><path d="M1144 81.800 L1147 79.200 L1156.500 87.700 L1153.700 90.500Z" fill="#f4f4f4"/><path d="M1150.500 82.200 L1154 78.700 L1156.300 81 L1152.800 84.500Z" fill="#f4f4f4"/>
<!-- colour wheel -->
<g transform="translate(1181 69.900)"><path d="M0 0 L-4 -6.930 A8 8 0 0 1 4 -6.930Z" fill="#f6c343"/><path d="M0 0 L4 -6.930 A8 8 0 0 1 8 0Z" fill="#f58b3c"/><path d="M0 0 L8 0 A8 8 0 0 1 4 6.930Z" fill="#f25c5c"/><path d="M0 0 L4 6.930 A8 8 0 0 1 -4 6.930Z" fill="#8a5cf5"/><path d="M0 0 L-4 6.930 A8 8 0 0 1 -8 0Z" fill="#1fa8dc"/><path d="M0 0 L-8 0 A8 8 0 0 1 -4 -6.930Z" fill="#5fd08c"/></g>
<!-- lineweight -->
<g fill="#dcdcdc"><rect x="1173" y="85.800" width="16" height="1.200"/><rect x="1173" y="88.900" width="16" height="2.100"/><rect x="1173" y="93.200" width="16" height="2.800"/><rect x="1173" y="98.100" width="16" height="3.800"/></g>
<!-- linetype -->
<g stroke="#dcdcdc" stroke-width="1.100"><path d="M1173 111.400 H1188" stroke-dasharray="1 1"/><path d="M1173 114.500 H1188" stroke-dasharray="3 1.200"/><path d="M1173 117.600 H1188"/><path d="M1173 120.600 H1188" stroke-dasharray="3.500 1 1 1"/><path d="M1173 123.500 H1188" stroke-dasharray="3 1.500"/></g>
<!-- group -->
<path d="M1384.600 66.300 H1380.100 V92.700 H1384.600 M1395 92.700 H1399.400 V79.500" stroke="#f4f4f4" stroke-width="2"/>
<rect x="1385" y="69.800" width="9.300" height="7" fill="#3f7fb0" stroke="#5bb8f0" stroke-width="1.600"/>
<circle cx="1389.800" cy="84.800" r="5" fill="#a8a8a8" stroke="#d8d8d8" stroke-width="1.200"/>
<g transform="translate(1401.500 70.600) scale(1.800)"><use href="#star" fill="#fbd070"/></g>
<!-- ungroup -->
<rect x="1422.600" y="65.600" width="5.200" height="4.400" fill="#4a6a86" stroke="#5bb8f0" stroke-width="1"/><circle cx="1425.100" cy="74.200" r="2.600" fill="#8a8a8a" stroke="#cfcfcf" stroke-width=".9"/>
<path d="M1430.500 63.600 H1432.800 V78.500 H1430.500" stroke="#f0f0f0" stroke-width="1.100"/><path d="M1429.800 69 l5.600 5.800 m0 -5.800 l-5.600 5.800" stroke="#f04a5a" stroke-width="1.700"/>
<!-- group edit -->
<path d="M1422.500 87.600 H1420.400 V100.400 H1422.500 M1428.200 87.600 H1430.400 V93.500" stroke="#f0f0f0" stroke-width="1.100"/>
<rect x="1423.600" y="89.700" width="4.200" height="3" fill="#4a6a86" stroke="#5bb8f0" stroke-width="1"/><circle cx="1425.600" cy="96.700" r="2.400" fill="#8a8a8a" stroke="#cfcfcf" stroke-width=".9"/>
<use href="#pencil" x="1427.500" y="101"/>
<!-- group select -->
<path d="M1422.500 111.600 H1420.400 V125.500 H1422.500 M1428.200 111.600 H1430.400 V114" stroke="#f4f4f4" stroke-width="1.100"/>
<rect x="1423.300" y="113.800" width="4.500" height="3.200" stroke="#5fd06c" stroke-width="1.100"/><circle cx="1425.400" cy="120.800" r="2.400" stroke="#5fd06c" stroke-width="1.100"/>
<use href="#cur" x="1429" y="114.200" fill="#fff" stroke="#445" stroke-width=".5"/>
<!-- measure -->
<path d="M1465.400 70 V79.200 M1492.500 70 V79.200 M1467.500 74.400 H1490.500" stroke="#d8d8d8" stroke-width="1.100"/><path d="M1466 74.400 l3.600 -2 v4z M1491.900 74.400 l-3.600 -2 v4z" fill="#d8d8d8"/>
<rect x="1465.100" y="79.900" width="28.100" height="6" fill="#fbd070"/><path d="M1468 80 v2.800 M1471 80 v2 M1474 80 v2.800 M1477 80 v2 M1480 80 v2.800 M1483 80 v2 M1486 80 v2.800 M1489 80 v2" stroke="#fdeec0" stroke-width=".9"/>
<!-- quick select -->
<rect x="1524.200" y="70" width="8.800" height="8.900" fill="#f4f4f4"/><path d="M1525.800 72.500 h1.200 M1528 72.500 h3.800 M1525.800 74.700 h1.200 M1528 74.700 h3.800 M1525.800 76.900 h1.200 M1528 76.900 h3.800" stroke="#1a9ad8" stroke-width="1"/>
<path d="M1526 62.800 l-3 3.800 h2 l-1.800 3 l4.800 -4.500 h-2.200 l2 -2.300z" fill="#fbd070"/>
<g transform="translate(1517 67.300) scale(.95)"><use href="#cur" fill="#f8f8f8"/></g>
<!-- select similar -->
<rect x="1517.500" y="87.700" width="14.200" height="13.800" rx="2" stroke="#4fd07c" stroke-width="1.200" stroke-dasharray="2 1.200"/>
<path d="M1520 97 V90.500 H1528.500 V93 H1523 V97Z" fill="#4fd07c"/><rect x="1523.500" y="93.500" width="5.500" height="5" fill="#3a9a5c"/>
<g transform="translate(1525.800 91.500) scale(.92)"><use href="#cur" fill="#f8f8f8" stroke="#444" stroke-width=".4"/></g>
<!-- calculator -->
<rect x="1519.300" y="111.100" width="11.500" height="15.800" fill="#dcdcdc"/><rect x="1521" y="112.800" width="8.100" height="2.600" fill="#5d5d5d"/>
<g fill="#5d5d5d"><rect x="1521" y="117" width="2" height="2"/><rect x="1524" y="117" width="2" height="2"/><rect x="1527" y="117" width="2" height="2"/><rect x="1521" y="120.200" width="2" height="2"/><rect x="1524" y="120.200" width="2" height="2"/><rect x="1527" y="120.200" width="2" height="2"/><rect x="1521" y="123.400" width="2" height="2"/><rect x="1524" y="123.400" width="2" height="2"/><rect x="1527" y="123.400" width="2" height="2"/></g>
<!-- paste -->
<rect x="1553.900" y="64.900" width="22.300" height="25.100" fill="#deb07a"/><path d="M1559.700 66.200 V64.200 H1562.700 V62.200 H1567.400 V64.200 H1570.300 V66.200Z" fill="#f4f4f4"/>
<path d="M1561.900 72.100 H1573.700 L1580 78 V94 H1561.900Z" fill="#dcdcdc" stroke="#5d5d5d" stroke-width=".7"/><path d="M1573.700 72.100 V78 H1580Z" fill="#f6f6f6"/>
<!-- cut -->
<rect x="1597" y="62.900" width="12.100" height="14.300" fill="#d2d2d2"/><path d="M1599.500 66.500 h7.500 M1599.500 69.300 h5 M1599.500 72.100 h4 M1599.500 74.800 h3.500" stroke="#5d5d5d" stroke-width="1"/>
<path d="M1604.500 69.500 L1611.500 77 M1613 69.500 L1606 77" stroke="#f8f8f8" stroke-width="1.300"/><circle cx="1605.500" cy="77.200" r="1.700" stroke="#f8f8f8" stroke-width="1.100" fill="#5d5d5d"/><circle cx="1611" cy="77.200" r="1.700" stroke="#f8f8f8" stroke-width="1.100" fill="#5d5d5d"/>
<!-- copy -->
<path d="M1598 87.100 H1603 L1604.700 89 V99.900 H1598Z" fill="#d8d8d8"/><path d="M1600.900 90.400 H1608 L1610.900 93.500 V102.800 H1600.900Z" fill="#dcdcdc" stroke="#5d5d5d" stroke-width=".8"/><path d="M1608 90.400 V93.500 H1610.900Z" fill="#f6f6f6"/>
<!-- base -->
<path d="M1634.900 66.100 H1649.100 V75.800 H1667 V90 H1634.900Z" fill="#dcdcdc"/>
<!-- launchers -->
<path d="M1363.300 141.300 l4 4" stroke="#f2f2f2" stroke-width="1.300"/><path d="M1368.200 141.800 v4.400 h-4.400z" fill="#f2f2f2"/>
<path d="M1671.500 141.300 l4 4" stroke="#f2f2f2" stroke-width="1.300"/><path d="M1676.400 141.800 v4.400 h-4.400z" fill="#f2f2f2"/>
</svg>
<!-- DOC TABS -->
<div class="a" style="left:10px;top:152px;width:1900px;height:1px;background:#242424"></div>
<div class="a" style="left:10px;top:153px;width:1900px;height:1.2px;background:#8e8e8e"></div>
<div class="a" style="left:10px;top:154px;width:1900px;height:26px;background:#383838"></div>
<div class="a" style="left:10px;top:179px;width:1900px;height:4px;background:#5e5e5e"></div>
<svg style="left:0;top:0" width="1919" height="1039" viewBox="0 0 1919 1039">
<defs><pattern id="hat" width="3" height="3" patternUnits="userSpaceOnUse"><path d="M0 3 L3 0" stroke="#757575" stroke-width=".7"/></pattern>
<linearGradient id="act" x1="0" y1="0" x2="0" y2="1"><stop offset="0" stop-color="#8c8c8c"/><stop offset=".3" stop-color="#7e7e7e"/><stop offset=".55" stop-color="#707070"/><stop offset=".8" stop-color="#626262"/><stop offset="1" stop-color="#5e5e5e"/></linearGradient>
<linearGradient id="ina" x1="0" y1="0" x2="0" y2="1"><stop offset="0" stop-color="#6c6c6c"/><stop offset=".12" stop-color="#646464"/><stop offset=".5" stop-color="#5d5d5d"/><stop offset=".9" stop-color="#555"/><stop offset="1" stop-color="#4e4e4e"/></linearGradient></defs>
<path d="M27 179.5 C33 179.5 31 157.5 38 157.5 H148 C155 157.5 156 161 156 167 C156 175 152 179.5 146 179.5 Z" fill="url(#ina)" stroke="#444" stroke-width=".8"/>
<path d="M36 158.5 H146 V163 H34Z" fill="url(#hat)" opacity=".8"/>
<path d="M153 179.5 C159 179.5 157 157.5 164 157.5 H333 C340 157.5 341 161 341 167 C341 175 337 179.5 331 179.5 Z" fill="url(#ina)" stroke="#444" stroke-width=".8"/>
<path d="M162 158.5 H331 V163 H160Z" fill="url(#hat)" opacity=".8"/>
<path d="M322.0 166 l6 6 m0 -6 l-6 6" stroke="#303030" stroke-width="1.5" fill="none"/>
<path d="M340 179.5 C346 179.5 344 157.5 351 157.5 H545 C552 157.5 553 161 553 167 C553 175 549 179.5 543 179.5 Z" fill="url(#ina)" stroke="#444" stroke-width=".8"/>
<path d="M349 158.5 H543 V163 H347Z" fill="url(#hat)" opacity=".8"/>
<path d="M534.2 166 l6 6 m0 -6 l-6 6" stroke="#303030" stroke-width="1.5" fill="none"/>
<path d="M552 179.5 C558 179.5 556 157.5 563 157.5 H734 C741 157.5 742 161 742 167 C742 175 738 179.5 732 179.5 Z" fill="url(#ina)" stroke="#444" stroke-width=".8"/>
<path d="M561 158.5 H732 V163 H559Z" fill="url(#hat)" opacity=".8"/>
<path d="M723.5 166 l6 6 m0 -6 l-6 6" stroke="#303030" stroke-width="1.5" fill="none"/>
<path d="M741 179.5 C747 179.5 745 157.5 752 157.5 H924 C931 157.5 932 161 932 167 C932 175 928 179.5 922 179.5 Z" fill="url(#ina)" stroke="#444" stroke-width=".8"/>
<path d="M750 158.5 H922 V163 H748Z" fill="url(#hat)" opacity=".8"/>
<path d="M913.4 166 l6 6 m0 -6 l-6 6" stroke="#303030" stroke-width="1.5" fill="none"/>
<path d="M931 179.5 C937 179.5 935 157.5 942 157.5 H1115 C1122 157.5 1123 161 1123 167 C1123 175 1119 179.5 1113 179.5 Z" fill="url(#ina)" stroke="#444" stroke-width=".8"/>
<path d="M940 158.5 H1113 V163 H938Z" fill="url(#hat)" opacity=".8"/>
<path d="M1104.6 166 l6 6 m0 -6 l-6 6" stroke="#303030" stroke-width="1.5" fill="none"/>
<path d="M1122 179.5 C1128 179.5 1126 157.5 1133 157.5 H1347 C1354 157.5 1355 161 1355 167 C1355 175 1351 179.5 1345 179.5 Z" fill="url(#ina)" stroke="#444" stroke-width=".8"/>
<path d="M1131 158.5 H1345 V163 H1129Z" fill="url(#hat)" opacity=".8"/>
<path d="M1336.6 166 l6 6 m0 -6 l-6 6" stroke="#303030" stroke-width="1.5" fill="none"/>
<path d="M1354 179.5 C1360 179.5 1358 157.5 1365 157.5 H1599 C1606 157.5 1607 161 1607 167 C1607 175 1603 179.5 1597 179.5 Z" fill="url(#ina)" stroke="#444" stroke-width=".8"/>
<path d="M1363 158.5 H1597 V163 H1361Z" fill="url(#hat)" opacity=".8"/>
<path d="M1589.6 166 l6 6 m0 -6 l-6 6" stroke="#303030" stroke-width="1.5" fill="none"/>
<path d="M1606 180 C1611.5 180 1609.5 157.5 1616.5 157.5 H1738 C1747 157.5 1745 180 1755 180 Z" fill="url(#act)"/>
<path d="M1724.5 166 l6 6 m0 -6 l-6 6" stroke="#3a3a3a" stroke-width="1.5" fill="none"/>
<path d="M1750.5 161.5 H1763 C1769 161.5 1772.5 167 1772.5 175.6 H1760 C1754 175.6 1752 168 1750.5 161.5 Z" fill="#505050"/>
<path d="M1757.5 168.7 h9 M1762 164.2 v9" stroke="#dcdcdc" stroke-width="1.8"/>
<path d="M1892.5 161.5 l3.8 4 l3.8 -4 M1892.5 167.5 l3.8 4 l3.8 -4" stroke="#c4c4c4" stroke-width="1.4" fill="none"/>
</svg>
<div class="t" style="letter-spacing:-0.111px;left:41.70px;top:161.84px;color:#d6d6d6">Start</div>
<div class="t" style="letter-spacing:-0.026px;left:165.00px;top:161.84px;color:#d6d6d6">model851-ExteriorWallLight</div>
<div class="t" style="letter-spacing:-0.039px;left:351.00px;top:161.84px;color:#d6d6d6">model901-FireControlSymbol05*</div>
<div class="t" style="letter-spacing:-0.021px;left:563.90px;top:161.84px;color:#d6d6d6">model951-Football_Stadium</div>
<div class="t" style="letter-spacing:-0.030px;left:752.80px;top:161.84px;color:#d6d6d6">model1001-FurnitureSundial</div>
<div class="t" style="letter-spacing:-0.124px;left:942.80px;top:161.84px;color:#d6d6d6">model1051-GardenPlantPlan</div>
<div class="t" style="letter-spacing:-0.120px;left:1133.90px;top:161.84px;color:#d6d6d6">model1101-GutterDetailAtRoofEaves</div>
<div class="t" style="letter-spacing:-0.071px;left:1365.70px;top:161.84px;color:#d6d6d6">model1151-HighwaysCatchBasinSection</div>
<div class="t" style="letter-spacing:0.104px;left:1618.90px;top:161.84px;color:#fff">model1157-Hinge</div>
<!-- CANVAS CONTENT -->
<div class="t" style="letter-spacing:0.201px;left:13.20px;top:190.14px;color:#f2f2f2">[&#8722;][Top][2D Wireframe]</div>
<svg id="dwg" style="left:0;top:0" width="1919" height="1039" viewBox="0 0 1919 1039" fill="none" stroke="#e9e9e9" stroke-width="1.15">
<!-- top view -->
<path d="M647 376.5 H851 A33 33 0 0 1 883 403.5 L903.7 505 Q905.4 513 903.7 521 L883 622.5 A33 33 0 0 1 851 649.5 H647 A33 33 0 0 1 615 622.5 L594.3 521 Q592.6 513 594.3 505 L615 403.5 A33 33 0 0 1 647 376.5Z"/>
<path d="M700 376.5 A233.5 233.5 0 0 1 798 376.5 M700 649.5 A233.5 233.5 0 0 0 798 649.5"/>
<path d="M699.7 376.5 V649.5 M798.2 376.5 V649.5"/>
<path d="M749 376.5 V649.5" stroke-width="1.7"/>
<path d="M607 458.5 H891.3 V567.7 H607 Z M650.7 458.5 V567.7 M847.5 458.5 V567.7 M607 510.6 H891.3"/>
<path d="M607 516.2 H891.3" stroke-width="1.8"/>
<path d="M608.2 458.5 V567.7 M890.2 458.5 V567.7" stroke-width="0.8"/>
<circle cx="655.5" cy="420" r="33.2"/><circle cx="655.5" cy="420" r="15.4"/>
<circle cx="842.6" cy="420" r="33.2"/><circle cx="842.6" cy="420" r="15.4"/>
<circle cx="655.5" cy="606.5" r="33.2"/><circle cx="655.5" cy="606.5" r="15.4"/>
<circle cx="842.6" cy="606.5" r="33.2"/><circle cx="842.6" cy="606.5" r="15.4"/>
<!-- front view -->
<path d="M593.3 786.5 V772.4 L650.9 736.7 H847 L904.6 772.4 V786.5 Z"/>
<circle cx="748.7" cy="737" r="49.6"/>
<path d="M798.3 729.9 H847.2 L885.6 753.8 V760"/>
<path d="M622.5 754.7 V772.4 H688.4 V736.7 M809.6 736.7 V772.4 H875 V754.7"/>
<path d="M640.2 772.4 V786.5 M655.5 772.4 V786.5 M670.7 772.4 V786.5 M827.7 772.4 V786.5 M842.6 772.4 V786.5 M857.5 772.4 V786.5"/>
<!-- side view -->
<path d="M1015.5 688.2 H1288.7 V786.1 H1015.5 Z"/>
<path d="M1015.5 688.2 Q1004.5 737 1015.5 786.1 M1288.7 688.2 Q1299.8 737 1288.7 786.1"/>
<path d="M1097.4 688.2 V772.4 M1206.6 688.2 V772.4 M1015.5 772.4 H1288.7"/>
<path d="M1097.4 729.6 H1206.6 M1097.4 753.7 H1206.6 M1097.4 760.6 H1206.6"/>
<path d="M1015.5 736.4 H1097.4 M1206.6 736.4 H1288.7"/>
<path d="M1025.5 736.4 V772.4 M1091.8 736.4 V772.4 M1212.3 736.4 V772.4 M1278.2 736.4 V772.4"/>
<path d="M1025.5 736.4 A38.8 38.8 0 0 0 1091.8 736.4 M1212.3 736.4 A38.8 38.8 0 0 0 1278.2 736.4"/>
<path d="M1043.3 772.4 V786.1 M1058.5 772.4 V786.1 M1073.7 772.4 V786.1 M1230.5 772.4 V786.1 M1245.6 772.4 V786.1 M1260.4 772.4 V786.1"/>
</svg>
<!-- VIEWCUBE -->
<svg style="left:0;top:0" width="1919" height="1039" viewBox="0 0 1919 1039">
<circle cx="1827.1" cy="288.9" r="53.7" fill="none" stroke="#404850" stroke-width="13.4"/>
<rect x="1801.1" y="262.9" width="51.8" height="51.9" fill="#b3b4b6"/>
<rect x="1810.8" y="272.8" width="32.2" height="32.4" fill="#a6a9b4"/>
<rect x="1803.1" y="376.6" width="47.7" height="17.1" rx="4" fill="#9fa2b0" stroke="#878a98" stroke-width="1"/>
<path d="M1838 382.6 h7.4 l-3.7 4.4z" fill="#c9cad2" stroke="#83859a" stroke-width=".6"/>
<!-- viewport controls -->
<path d="M1848.800 200.550 h10.400" stroke="#f0f0f0" stroke-width="2.900"/>
<rect x="1871.200" y="192.700" width="8" height="8.100" fill="#f4f4f4"/><rect x="1868.400" y="194.300" width="9.200" height="9.300" fill="#212830"/><path d="M1869 194.900 h8 v8.100 h-8z M1871.200 197.300 v3.300 h3.500 v-3.300z" fill="#f4f4f4" fill-rule="evenodd"/>

<path d="M1889.2 194.2 l8.5 7.8 M1897.7 194.2 l-8.5 7.8" stroke="#f4f4f4" stroke-width="2.7"/>
</svg>
<div class="t" style="left:1807px;top:281.3px;width:40px;text-align:center;color:#474b55;font-weight:bold;font-size:13.8px;line-height:16px;height:16px;transform:scaleX(.77)">TOP</div>
<div class="t cl" style="left:1807px;top:220.5px">N</div>
<div class="t cl" style="left:1807px;top:333.5px">S</div>
<div class="t cl" style="left:1751px;top:276.5px">W</div>
<div class="t cl" style="left:1863.5px;top:276.5px">E</div>
<div class="t" style="left:1808px;top:378px;color:#585d6c;font-size:11px">WCS</div>
<!-- NAV BAR -->
<div class="a" id="navbar" style="left:1873.8px;top:418.8px;width:32.3px;height:212px;background:#5b5f67;border:1px solid #696d75;border-radius:3px;box-shadow:0 0 0 1.2px #161a20"></div>
<svg style="left:0;top:0" width="1919" height="1039" viewBox="0 0 1919 1039" fill="none" stroke="#434850" stroke-width="1.100">
<circle cx="1900" cy="424" r="3.200"/><path d="M1898 422 l4 4 m0 -4 l-4 4" stroke-width=".9"/>
<path d="M1889.700 438.500 H1900 V449 A10.300 10.300 0 1 1 1889.700 438.500Z"/><circle cx="1889.700" cy="448.900" r="5.600"/><path d="M1885.700 452.900 l-3.300 3.300 M1893.700 452.900 l3.300 3.300"/>
<path d="M1887.400 467.800 h6 l-3 3.400z" fill="#434850" stroke="none"/>
<path d="M1877 475.100 H1903" stroke="#626872" stroke-width=".8"/>
<path d="M1884.500 490 V483.500 a1.300 1.300 0 0 1 2.600 0 V488 V481.500 a1.300 1.300 0 0 1 2.600 0 V488 V482 a1.300 1.300 0 0 1 2.600 0 V489 V485 a1.300 1.300 0 0 1 2.600 0 V494 C1897.500 498 1895 501 1893 502.500 H1887 C1884 499 1882 495.500 1879 493 C1878 491.500 1880 490.500 1881.500 491.500 L1884.500 494Z"/>
<path d="M1879 509 L1893 523 M1893 509 L1879 523 M1879 509 h3.500 M1879 509 v3.500 M1893 509 h-3.500 M1893 509 v3.500 M1879 523 h3.500 M1879 523 v-3.500"/><circle cx="1894" cy="522.300" r="4.300" fill="#5b5f67"/><path d="M1897.200 525.600 L1901.200 529.600" stroke-width="2.200"/>
<path d="M1887.500 537.600 h6 l-3 3.400z" fill="#434850" stroke="none"/>
<ellipse cx="1889.600" cy="559.600" rx="11" ry="4.300" stroke-dasharray="2 1.200"/><path d="M1888.100 567.400 V552 H1885.600 L1889.600 546.500 L1893.600 552 H1891.100 V567.400Z" fill="#5b5f67"/><path d="M1881 562 l4.500 -2.500 v5z" fill="#434850" stroke="none"/>
<path d="M1887.500 575.900 h6 l-3 3.400z" fill="#434850" stroke="none"/>
<path d="M1877 583.200 H1903" stroke="#626872" stroke-width=".8"/>
<rect x="1878.700" y="589" width="5.600" height="5.300"/><rect x="1886.800" y="589" width="5.600" height="5.300"/><rect x="1894.900" y="589" width="5.600" height="5.300"/>
<rect x="1878.700" y="597.800" width="16" height="12.800"/><path d="M1883.500 600.500 v7.500 l6.500 -3.750z" fill="#434850" stroke="none"/>
<circle cx="1900.100" cy="624.400" r="3.300"/><path d="M1898 624 h4.200 l-2.100 2.300z" fill="#434850" stroke="none"/>
</svg>
<!-- COMMAND LINE -->
<div class="a hl" style="left:451px;top:910.5px;width:788px;height:14.5px"></div>
<div class="a hl" style="left:451px;top:930.5px;width:60px;height:14.5px"></div>
<div class="a hl" style="left:451px;top:950.5px;width:60px;height:14.5px"></div>
<div class="t mono" style="left:453px;top:911px;color:#cfcfcf">Autodesk DWG.&nbsp; This file is a TrustedDWG last saved by an Autodesk application or Autodesk licensed application.</div>
<div class="t mono" style="left:453px;top:931px;color:#f2f2f2">Command:</div>
<div class="t mono" style="left:453px;top:951px;color:#f2f2f2">Command:</div>
<div class="a" style="left:389px;top:968.5px;width:1142px;height:26px;background:#3a3a3a;border-radius:3px 0 0 0"></div>
<div class="a" style="left:444.5px;top:968.5px;width:1086.5px;height:26px;background:linear-gradient(#cacbcd 0,#bfc0c2 3px,#bfc0c2 100%)"></div>
<div class="t mono" style="left:481.5px;top:974px;color:#7a7a7a;font-style:italic">Type a command</div>
<svg style="left:0;top:0" width="1919" height="1039" viewBox="0 0 1919 1039">
<g fill="#9a9a9a"><rect x="393" y="972" width="1.3" height="1.3"/><rect x="393" y="975" width="1.3" height="1.3"/><rect x="393" y="978" width="1.3" height="1.3"/><rect x="393" y="981" width="1.3" height="1.3"/><rect x="393" y="984" width="1.3" height="1.3"/><rect x="393" y="987" width="1.3" height="1.3"/>
<rect x="396" y="972" width="1.3" height="1.3"/><rect x="396" y="975" width="1.3" height="1.3"/><rect x="396" y="978" width="1.3" height="1.3"/><rect x="396" y="981" width="1.3" height="1.3"/><rect x="396" y="984" width="1.3" height="1.3"/><rect x="396" y="987" width="1.3" height="1.3"/></g>
<path d="M405 977 l8 8 m0 -8 l-8 8" stroke="#e6e6e6" stroke-width="1.7" fill="none"/>
<path d="M425.5 987.5 l7 -7.2" stroke="#e0e0e0" stroke-width="2.2" stroke-linecap="round"/>
<path d="M437.3 976.2 a3.6 3.6 0 1 0 0.9 4.2 l-2.6 0.3 l-1.2 -2 z" fill="#e0e0e0"/>
<rect x="450.5" y="975.5" width="15.5" height="11" fill="#bfc0c2" stroke="#3c3c3c" stroke-width="1"/>
<rect x="450.5" y="975.5" width="15.5" height="2.6" fill="#3c3c3c"/>
<path d="M452.5 980.2 l2.5 1.7 l-2.5 1.7 M456 984.3 h3" stroke="#3c3c3c" stroke-width="1" fill="none"/>
<path d="M468.7 979.3 h5 l-2.5 2.8z" fill="#3c3c3c"/>
<path d="M1520.5 982.5 h7 l-3.5 -4z" fill="#1c1c1c"/>
</svg>
<!-- STATUS BAR -->
<svg style="left:0;top:0" width="1919" height="1039" viewBox="0 0 1919 1039">
<defs><linearGradient id="mt" x1="0" y1="0" x2="0" y2="1"><stop offset="0" stop-color="#444"/><stop offset=".5" stop-color="#626262"/><stop offset="1" stop-color="#929292"/></linearGradient>
<linearGradient id="lt" x1="0" y1="0" x2="0" y2="1"><stop offset="0" stop-color="#4a4a4a"/><stop offset="1" stop-color="#5c5c5c"/></linearGradient></defs>
<path d="M18.5 995 C24 995 23 1012.8 30 1012.8 H70 C77 1012.8 76 995 81.5 995 Z" fill="url(#mt)"/>
<path d="M79.5 995 C85 995 84 1012.8 91 1012.8 H134.5 C141.5 1012.8 140.5 995 146 995 Z" fill="url(#lt)" stroke="#333" stroke-width=".6"/>
<path d="M156 995.3 H171 C171 1004 166 1011.7 158 1011.7 H149 C150 1005 152 999 156 995.3 Z" fill="#4f4f4f"/>
<path d="M155.5 1004 h8.6 M159.8 999.7 v8.6" stroke="#e4e4e4" stroke-width="1.8"/>
<!-- status groups -->
<rect x="1319" y="995.4" width="591" height="27.4" fill="#4f4f4f"/>
<g fill="#515151" stroke="#858585" stroke-width="1">
<rect x="1320.5" y="996.9" width="47.5" height="24.5"/>
<rect x="1370.5" y="996.9" width="64" height="24.5"/>
<rect x="1436.5" y="996.9" width="167" height="24.5"/>
<rect x="1605.5" y="996.9" width="106" height="24.5"/>
<rect x="1713.5" y="996.9" width="40" height="24.5"/>
<rect x="1753.5" y="996.9" width="25.5" height="24.5"/>
<rect x="1780.5" y="996.9" width="26" height="24.5"/>
<rect x="1808.5" y="996.9" width="49.5" height="24.5"/>
<rect x="1859.5" y="996.9" width="49.5" height="24.5"/>
</g>
<g fill="#5b8cc6">
<rect x="1438" y="998" width="22" height="22"/>
<rect x="1541" y="998" width="22" height="22"/>
<rect x="1565" y="998" width="22" height="22"/>
<rect x="1607" y="998" width="22" height="22"/>
</g>
<g fill="#f0f0f0">
<path d="M1423 1007 h7.4 l-3.7 4z"/><path d="M1488.7 1007 h7.4 l-3.7 4z"/><path d="M1527.9 1007 h7.4 l-3.7 4z"/><path d="M1591.8 1007 h7.4 l-3.7 4z"/><path d="M1699.8 1007 h7.4 l-3.7 4z"/><path d="M1741.9 1007 h7.4 l-3.7 4z"/>
</g>
<!-- grid -->
<path d="M1378.500 1000.700 v15.400 M1382.500 1000.700 v15.400 M1386.500 1000.700 v15.400 M1375 1004.500 h15 M1375 1008.500 h15 M1375 1012.500 h15" stroke="#f0f0f0" stroke-width="1.100" fill="none"/>
<!-- snap dots -->
<g fill="#f4f4f4"><rect x="1400.9" y="1002.9" width="2.2" height="2.2"/><rect x="1405.9" y="1002.9" width="2.2" height="2.2"/><rect x="1410.9" y="1002.9" width="2.2" height="2.2"/><rect x="1400.9" y="1007.9" width="2.2" height="2.2"/><rect x="1405.9" y="1007.9" width="2.2" height="2.2"/><rect x="1410.9" y="1007.9" width="2.2" height="2.2"/><rect x="1400.9" y="1012.9" width="2.2" height="2.2"/><rect x="1405.9" y="1012.9" width="2.2" height="2.2"/><rect x="1410.9" y="1012.9" width="2.2" height="2.2"/></g>
<!-- ortho -->
<path d="M1442.5 1001.500 V1016.5 H1457" stroke="#fff" stroke-width="1.4" fill="none"/><rect x="1442.500" y="1012.500" width="4" height="4" fill="none" stroke="#fff" stroke-width="1"/>
<!-- polar -->
<circle cx="1472" cy="1009.5" r="6.5" fill="none" stroke="#e8e8e8" stroke-width="1.3"/><path d="M1472 1009.5 h9 M1472 1009.5 l6.500 -7.500" stroke="#e8e8e8" stroke-width="1.2"/>
<!-- isodraft -->
<path d="M1511.500 1001 v16" stroke="#4ccf6c" stroke-width="1.2"/><path d="M1505 1002 l13 13" stroke="#e0484a" stroke-width="1.3"/><rect x="1510" y="1007.500" width="3" height="3" fill="#4b4b4b" stroke="#f0f0f0" stroke-width=".9"/>
<!-- otrack -->
<path d="M1544.500 1016.5 h14.500 M1544.500 1016.5 l12 -12.500" stroke="#fff" stroke-width="1.3" fill="none"/><rect x="1549.500" y="1007.500" width="3" height="3" fill="#fff"/>
<!-- osnap -->
<rect x="1570.500" y="1004.500" width="12" height="12" fill="none" stroke="#fff" stroke-width="1.3"/><rect x="1568.500" y="1002.500" width="4" height="4" fill="#5b8cc6" stroke="#fff" stroke-width="1"/>
<!-- annotation icons -->
<g id="anno"><path d="M1617 1001.500 l2.500 8 l4.500 7 l-5 -3 l-1 3.500 l-2 0 l-1 -3.500 l-5 3 l4.500 -7z" fill="#fff"/></g>
<circle cx="1623.500" cy="1004.500" r="2.300" fill="none" stroke="#fff" stroke-width="1"/>
<path d="M1641.500 1001.500 l2.500 8 l4.500 7 l-5 -3 l-1 3.500 l-2 0 l-1 -3.500 l-5 3 l4.500 -7z" fill="#dcdcdc"/>
<path d="M1648 1001 l-2.500 3.500 h2 l-2 3.500 l4.500 -4.500 h-2 l2 -2.500z" fill="#dcdcdc"/>
<path d="M1666 1002 l2.500 8 l4.500 7 l-5 -3 l-1 3.500 l-2 0 l-1 -3.500 l-5 3 l4.500 -7z" fill="#dcdcdc"/>
<!-- gear -->
<g transform="translate(1725.500 1009.500)" fill="#e8e8e8"><circle r="5.200"/><g id="teeth"><rect x="-1.500" y="-7.600" width="3" height="15.200"/><rect x="-1.500" y="-7.600" width="3" height="15.200" transform="rotate(45)"/><rect x="-1.500" y="-7.600" width="3" height="15.200" transform="rotate(90)"/><rect x="-1.500" y="-7.600" width="3" height="15.200" transform="rotate(135)"/></g><circle r="2.400" fill="#4b4b4b"/></g>
<!-- plus -->
<path d="M1758 1009.500 h16 M1766 1001.500 v16" stroke="#f4f4f4" stroke-width="1.500"/>
<!-- shapes -->
<rect x="1786" y="1001.500" width="5.500" height="5.500" fill="none" stroke="#e8e8e8" stroke-width="1"/><circle cx="1797.500" cy="1007.500" r="3.200" fill="none" stroke="#e8e8e8" stroke-width="1"/><path d="M1788.500 1016.500 l3.300 -5.500 l3.300 5.500z" fill="none" stroke="#e8e8e8" stroke-width="1"/>
<!-- workspace/gfx icons -->
<rect x="1811.500" y="1001.500" width="11" height="14" fill="#5b9bd8"/><rect x="1811.500" y="1010.500" width="8" height="5" fill="#f0c960"/><path d="M1815.500 1001.500 v9 M1811.500 1006 h11" stroke="#fff" stroke-width="1"/><circle cx="1815.500" cy="1006" r="1.500" fill="#fff"/><path d="M1819.500 1013.500 l2.500 2.500 l5 -5" stroke="#2fa84f" stroke-width="1.800" fill="none"/>
<rect x="1834.500" y="1001.500" width="14" height="11" fill="#e8e8e8"/><path d="M1835.500 1010.500 q3.500 -12 6 -3 q3 8 6 -4" stroke="#4a90d0" stroke-width="1.200" fill="none"/><path d="M1846.500 1009.500 l4 8 h-8z" fill="#f0802a"/>
<!-- fullscreen -->
<rect x="1864.500" y="1003.500" width="15" height="11" fill="none" stroke="#e8e8e8" stroke-width="1.200"/><path d="M1867 1012 l3.500 -3.500 M1867 1012 v-2.500 M1867 1012 h2.500 M1877 1006 l-3.500 3.500 M1877 1006 v2.500 M1877 1006 h-2.500" stroke="#e8e8e8" stroke-width="1" fill="none"/>
<!-- hamburger -->
<path d="M1887.500 1003.500 h16.500 M1887.500 1009.500 h16.500 M1887.500 1015.500 h16.500" stroke="#f0f0f0" stroke-width="1.600"/>
</svg>
<div class="t" style="letter-spacing:0.357px;left:32.50px;top:996.64px;color:#fff;font-weight:bold">Model</div>
<div class="t" style="letter-spacing:-0.117px;left:90.70px;top:996.64px;color:#cdcdcd">Layout1</div>
<div class="t" style="letter-spacing:-0.572px;left:1324.30px;top:1001.64px;color:#f4f4f4">MODEL</div>
<div class="t" style="left:1682.5px;top:1002px;color:#f4f4f4;font-size:11.5px;letter-spacing:-0.4px">1:1</div>
</div></div>
</body></html>
